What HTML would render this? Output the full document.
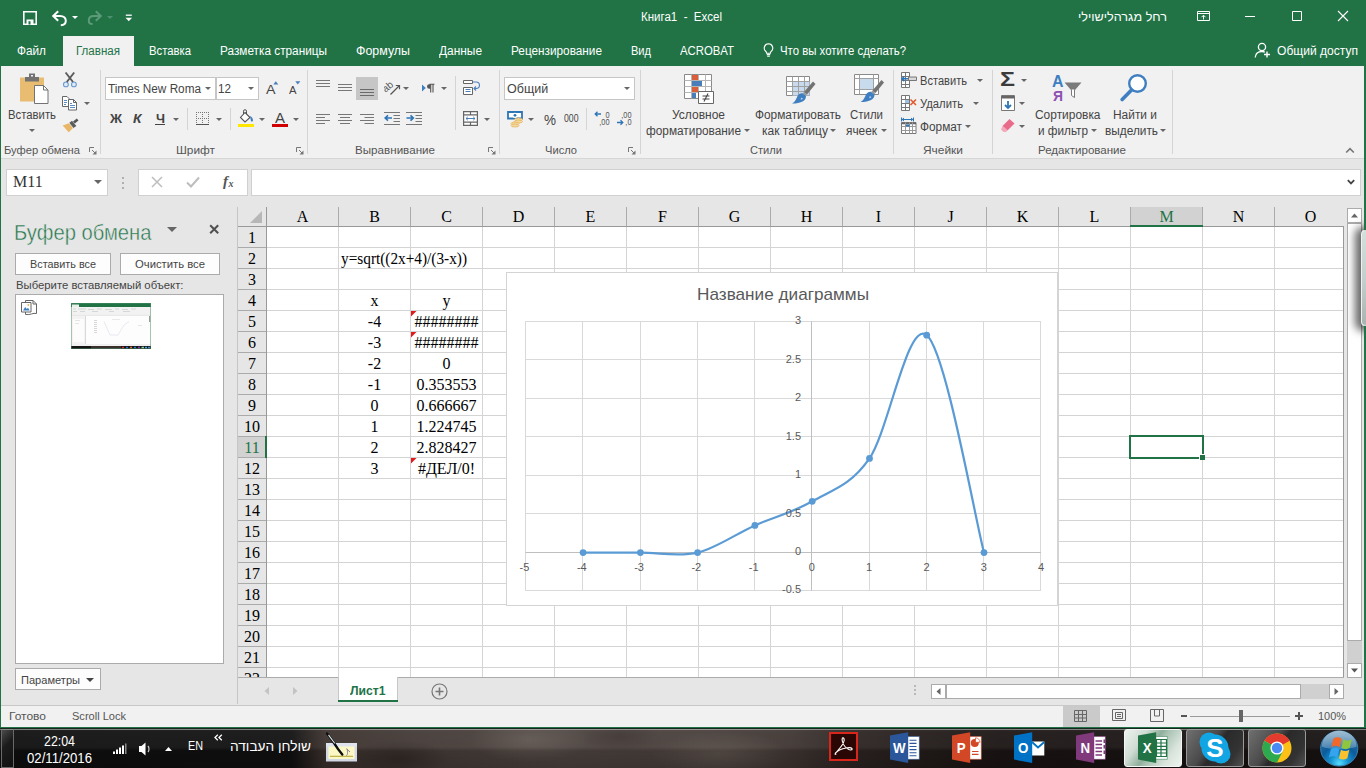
<!DOCTYPE html>
<html lang="ru"><head><meta charset="utf-8"><title>Книга1 - Excel</title>
<style>
html,body{margin:0;padding:0;}
body{width:1366px;height:768px;overflow:hidden;position:relative;background:#e6e6e6;font-family:"Liberation Sans","DejaVu Sans",sans-serif;color:#444;}
.b{position:absolute;box-sizing:border-box;display:block;}
.t{position:absolute;white-space:pre;line-height:1;transform-origin:0 0;color:#444;}
.s{font-family:"Liberation Serif","DejaVu Serif",serif;color:#000;}
</style></head><body>
<div id="window-frame" role="group" aria-label="Excel window">
<div class="b" style="left:0px;top:0px;width:1366px;height:66px;background:#217346;"></div>
<div class="b" style="left:1px;top:66px;width:1364px;height:93px;background:#f1f1f1;"></div>
<div class="b" style="left:1px;top:158px;width:1364px;height:1px;background:#d6d6d6;"></div>
<div class="b" style="left:1px;top:159px;width:1364px;height:546px;background:#e6e6e6;"></div>
</div>
<div id="titlebar" role="group" aria-label="Title bar">
<svg class="b" style="left:23px;top:11px;" width="14" height="14" viewBox="0 0 14 14"><path d="M.8 .8h12.400v12.400H.8z" fill="none" stroke="#fff" stroke-width="1.600"/><path d="M3.500 8.500h7v5h-7z" fill="#fff"/><path d="M5.500 10.200h2v3.300h-2z" fill="#217346"/></svg>
<svg class="b" style="left:51px;top:9.5px;" width="18" height="17" viewBox="0 0 18 17"><path d="M7.2 1.2 2.2 6l5 4.8" fill="none" stroke="#fff" stroke-width="2"/><path d="M2.6 6h6.6c3.4 0 5.6 2 5.6 4.8 0 2.600-2 4.400-5 4.400" fill="none" stroke="#fff" stroke-width="2"/></svg>
<svg class="b" style="left:71.5px;top:15.5px" width="6" height="3" viewBox="0 0 6 3"><path d="M0 0H6L3.0 3Z" fill="#fff"/></svg>
<svg class="b" style="left:84.5px;top:10px;" width="18" height="16" viewBox="0 0 18 16"><path d="M10.800 1.200 15.800 6l-5 4.800" fill="none" stroke="#5c9a78" stroke-width="2"/><path d="M15.400 6H9c-3.400 0-5.200 1.800-5.200 4.400 0 2 1.400 3.600 3.800 3.600" fill="none" stroke="#5c9a78" stroke-width="2"/></svg>
<svg class="b" style="left:106.5px;top:15.5px" width="6" height="3" viewBox="0 0 6 3"><path d="M0 0H6L3.0 3Z" fill="#4f9070"/></svg>
<svg class="b" style="left:125px;top:14px;" width="8" height="8" viewBox="0 0 8 8"><path d="M.8 1.200h6" stroke="#fff" stroke-width="1.300"/><path d="M.5 3.800h6.600L3.800 7.200z" fill="#fff"/></svg>
<span class="t" style="left:641.00px;top:11.00px;font-size:12.5px;transform:scaleX(0.9207);color:#fff;">Книга1  -  Excel</span>
<span class="t" style="left:1078.00px;top:11.00px;font-size:12.5px;transform:scaleX(1.0104);color:#fff;direction:rtl;unicode-bidi:plaintext;">רחל מגרהלישוילי</span>
<svg class="b" style="left:1197px;top:11px;" width="13" height="10" viewBox="0 0 13 10"><path d="M.5 .5h12v9H.5z" fill="none" stroke="#fff"/><path d="M.5 2.500h12" stroke="#fff"/><path d="M6.500 8.500V4.500M4.500 6.200 6.500 4.200 8.500 6.200" fill="none" stroke="#fff" stroke-width="1"/></svg>
<div class="b" style="left:1245px;top:16px;width:10px;height:1px;background:#fff;"></div>
<svg class="b" style="left:1291px;top:10px;" width="12" height="12" viewBox="0 0 12 12"><path d="M1.500 1.500h9v9h-9z" fill="none" stroke="#fff" stroke-width="1"/></svg>
<svg class="b" style="left:1337px;top:10px;" width="12" height="12" viewBox="0 0 12 12"><path d="M1 1l10 10M11 1 1 11" stroke="#fff" stroke-width="1.100"/></svg>
</div>
<div id="ribbon-tabs" role="group" aria-label="Ribbon tabs">
<div class="b" style="left:63px;top:36px;width:71px;height:30px;background:#f1f1f1;"></div>
<span class="t" style="left:17.00px;top:45.00px;font-size:12.5px;transform:scaleX(0.9437);color:#fff;">Файл</span>
<span class="t" style="left:76.00px;top:45.00px;font-size:12.5px;transform:scaleX(0.9248);color:#217346;">Главная</span>
<span class="t" style="left:149.00px;top:45.00px;font-size:12.5px;transform:scaleX(0.9040);color:#fff;">Вставка</span>
<span class="t" style="left:220.00px;top:45.00px;font-size:12.5px;transform:scaleX(0.9436);color:#fff;">Разметка страницы</span>
<span class="t" style="left:356.00px;top:45.00px;font-size:12.5px;transform:scaleX(0.9927);color:#fff;">Формулы</span>
<span class="t" style="left:439.00px;top:45.00px;font-size:12.5px;transform:scaleX(0.9522);color:#fff;">Данные</span>
<span class="t" style="left:511.00px;top:45.00px;font-size:12.5px;transform:scaleX(0.9428);color:#fff;">Рецензирование</span>
<span class="t" style="left:631.00px;top:45.00px;font-size:12.5px;transform:scaleX(0.8844);color:#fff;">Вид</span>
<span class="t" style="left:680.00px;top:45.00px;font-size:12.5px;transform:scaleX(0.9076);color:#fff;">ACROBAT</span>
<svg class="b" style="left:763px;top:43px;" width="11" height="15" viewBox="0 0 11 15"><path d="M5.500 .8a4.300 4.300 0 0 0-2.600 7.700c.5.500.7 1 .7 1.700h3.800c0-.7.200-1.200.7-1.700A4.300 4.300 0 0 0 5.500.8z" fill="none" stroke="#fff" stroke-width="1.100"/><path d="M3.800 11.600h3.400M4.200 13.300h2.600" stroke="#fff" stroke-width="1.100"/></svg>
<span class="t" style="left:780.00px;top:45.00px;font-size:12.5px;transform:scaleX(0.9118);color:#fff;">Что вы хотите сделать?</span>
<svg class="b" style="left:1254px;top:42px;" width="17" height="17" viewBox="0 0 17 17"><circle cx="8" cy="5" r="3.600" fill="none" stroke="#fff" stroke-width="1.300"/><path d="M1.200 15.500c.3-3.600 2.800-6 6.800-6 1.200 0 2 .2 2.800.6" fill="none" stroke="#fff" stroke-width="1.300"/><path d="M13 9.500v6M10 12.500h6" stroke="#fff" stroke-width="1.400"/></svg>
<span class="t" style="left:1277.00px;top:45.00px;font-size:12.5px;transform:scaleX(0.9645);color:#fff;">Общий доступ</span>
</div>
<div id="grp-clipboard" role="group" aria-label="Буфер обмена">
<svg class="b" style="left:20px;top:73px;" width="29" height="32" viewBox="0 0 29 32"><path d="M0 4.500h24v24H0z" fill="#e8bd72"/><path d="M5 4h14v4.500H5z" fill="#737373"/><path d="M9 .5h6v4H9z" fill="#737373"/><path d="M11 2h2v1.500h-2z" fill="#f1f1f1"/>
<path d="M14.500 12.500h9l4.500 4.500v13.500h-13.500z" fill="#fff" stroke="#737373"/><path d="M23.500 12.500v4.500h4.500" fill="none" stroke="#737373"/></svg>
<span class="t" style="left:8.00px;top:109.00px;font-size:12.5px;transform:scaleX(0.9059);">Вставить</span>
<svg class="b" style="left:29.0px;top:129.0px" width="6" height="3" viewBox="0 0 6 3"><path d="M0 0H6L3.0 3Z" fill="#666"/></svg>
<svg class="b" style="left:62px;top:71px;" width="17" height="18" viewBox="0 0 17 18"><circle cx="3.900" cy="13.400" r="2.400" fill="#ddebf9" stroke="#6a98cf" stroke-width="1.100"/><circle cx="11.900" cy="13.400" r="2.400" fill="#ddebf9" stroke="#6a98cf" stroke-width="1.100"/><path d="M3.600 1.500 11 11M12.200 1.500 4.800 11" stroke="#5a5a5a" stroke-width="1.900" fill="none"/></svg>
<svg class="b" style="left:62px;top:95px;" width="16" height="16" viewBox="0 0 16 16"><path d="M.5 1.500h4.500l2 2v8H.5z" fill="#fff" stroke="#666"/><path d="M2 5.500h3M2 7.500h3M2 9.500h2" stroke="#4a7ebb" stroke-width=".9"/><path d="M6.500 4.500h5l3 3v7.500h-8z" fill="#fff" stroke="#666"/><path d="M11.500 4.500v3h3" fill="none" stroke="#666"/><path d="M8 8.500h2M8 10.500h5M8 12.500h5" stroke="#4a7ebb" stroke-width=".9"/></svg>
<svg class="b" style="left:83.5px;top:102.0px" width="6" height="3" viewBox="0 0 6 3"><path d="M0 0H6L3.0 3Z" fill="#666"/></svg>
<svg class="b" style="left:62px;top:117px;" width="19" height="17" viewBox="0 0 19 17"><path d="M11 4.500 14.800 1.500 16.500 3.500 12.800 6.500z" fill="#555"/><path d="M7.300 5.800 10 3.800 14.400 9 11.400 10.900z" fill="#5c5c5c"/><path d="M.7 8.400 7 6.200 10.800 11.300 6.700 15.200z" fill="#e8b664"/></svg>
<span class="t" style="left:4.00px;top:145.00px;font-size:10.5px;transform:scaleX(1.0652);color:#555;">Буфер обмена</span>
<svg class="b" style="left:89px;top:147px;" width="8" height="8" viewBox="0 0 8 8"><path d="M.5 5V.5H5" fill="none" stroke="#777"/><path d="M3 3l3.500 3.500" stroke="#777"/><path d="M7.500 3.500v4h-4z" fill="#777"/></svg>
<div class="b" style="left:100px;top:70px;width:1px;height:84px;background:#d4d4d4;"></div>
</div>
<div id="grp-font" role="group" aria-label="Шрифт">
<div class="b" style="left:105px;top:77px;width:111px;height:23px;background:#fff;border:1px solid #c6c6c6;"></div>
<span class="t" style="left:108.00px;top:83.00px;font-size:12.5px;transform:scaleX(0.9407);">Times New Roma</span>
<svg class="b" style="left:205.0px;top:87.0px" width="6" height="3" viewBox="0 0 6 3"><path d="M0 0H6L3.0 3Z" fill="#666"/></svg>
<div class="b" style="left:216px;top:77px;width:43px;height:23px;background:#fff;border:1px solid #c6c6c6;"></div>
<span class="t" style="left:218.00px;top:83.00px;font-size:12.5px;transform:scaleX(0.9350);">12</span>
<svg class="b" style="left:248.0px;top:87.0px" width="6" height="3" viewBox="0 0 6 3"><path d="M0 0H6L3.0 3Z" fill="#666"/></svg>
<span class="t" style="left:265.50px;top:83.00px;font-size:13px;transform:scaleX(1.0956);">A</span>
<svg class="b" style="left:273px;top:81px;" width="6" height="4" viewBox="0 0 6 4"><path d="M.3 3.500 2.800 .3 5.300 3.500z" fill="#4a7ebb"/></svg>
<span class="t" style="left:288.50px;top:85.00px;font-size:10.5px;transform:scaleX(1.0709);">A</span>
<svg class="b" style="left:295px;top:81px;" width="6" height="4" viewBox="0 0 6 4"><path d="M.3 .3h5L2.800 3.500z" fill="#4a7ebb"/></svg>
<span class="t" style="left:109.50px;top:112.00px;font-size:13.5px;transform:scaleX(0.9835);color:#444;font-weight:700;">Ж</span>
<span class="t" style="left:133.00px;top:112.00px;font-size:13.5px;transform:scaleX(1.0242);color:#444;font-weight:700;font-style:italic;">К</span>
<span class="t" style="left:155.50px;top:112.00px;font-size:13.5px;transform:scaleX(0.9488);color:#444;font-weight:700;">Ч</span>
<div class="b" style="left:155px;top:124px;width:10px;height:1px;background:#444;"></div>
<svg class="b" style="left:173.0px;top:118.0px" width="6" height="3" viewBox="0 0 6 3"><path d="M0 0H6L3.0 3Z" fill="#666"/></svg>
<div class="b" style="left:187px;top:108px;width:1px;height:22px;background:#d4d4d4;"></div>
<svg class="b" style="left:196px;top:112px;" width="14" height="14" viewBox="0 0 14 14"><path d="M.5 0v12M6.500 0v12M12.500 0v12M0 .5h13M0 6.500h13" fill="none" stroke="#777" stroke-dasharray="1 1"/><path d="M0 12.500h13" stroke="#555"/></svg>
<svg class="b" style="left:216.0px;top:118.0px" width="6" height="3" viewBox="0 0 6 3"><path d="M0 0H6L3.0 3Z" fill="#666"/></svg>
<div class="b" style="left:230px;top:108px;width:1px;height:22px;background:#d4d4d4;"></div>
<svg class="b" style="left:237px;top:109px;" width="18" height="19" viewBox="0 0 18 19"><path d="M8 3.500 13 8.500 8 13 3.500 8.500z" fill="#fff" stroke="#555" stroke-width="1.100"/><path d="M6.500 5V2.200a1.500 1.500 0 0 1 3 0V5" fill="none" stroke="#555"/><path d="M13 7c1.800.8 3 2.500 3 4.200 0 .8-.5 1.300-1.100 1.300s-1.100-.5-1.100-1.300z" fill="#3f7fc1"/><path d="M1 15h16v3H1z" fill="#ffe700"/></svg>
<svg class="b" style="left:259.0px;top:118.0px" width="6" height="3" viewBox="0 0 6 3"><path d="M0 0H6L3.0 3Z" fill="#666"/></svg>
<span class="t" style="left:275.00px;top:111.00px;font-size:14px;transform:scaleX(1.0709);">A</span>
<div class="b" style="left:272px;top:124px;width:16px;height:3px;background:#d00000;"></div>
<svg class="b" style="left:293.0px;top:118.0px" width="6" height="3" viewBox="0 0 6 3"><path d="M0 0H6L3.0 3Z" fill="#666"/></svg>
<span class="t" style="left:176.00px;top:145.00px;font-size:10.5px;transform:scaleX(1.1289);color:#555;">Шрифт</span>
<svg class="b" style="left:296px;top:147px;" width="8" height="8" viewBox="0 0 8 8"><path d="M.5 5V.5H5" fill="none" stroke="#777"/><path d="M3 3l3.500 3.500" stroke="#777"/><path d="M7.500 3.500v4h-4z" fill="#777"/></svg>
<div class="b" style="left:307px;top:70px;width:1px;height:84px;background:#d4d4d4;"></div>
</div>
<div id="grp-align" role="group" aria-label="Выравнивание">
<svg class="b" style="left:316px;top:80px;" width="20" height="10" viewBox="0 0 20 10"><path d="M0 0.5h14" stroke="#777"/><path d="M0 3.5h14" stroke="#777"/><path d="M0 6.5h14" stroke="#777"/></svg>
<svg class="b" style="left:338px;top:84px;" width="20" height="10" viewBox="0 0 20 10"><path d="M0 0.5h14" stroke="#777"/><path d="M0 3.5h14" stroke="#777"/><path d="M0 6.5h14" stroke="#777"/></svg>
<div class="b" style="left:356px;top:77px;width:22px;height:23px;background:#c6c6c6;"></div>
<svg class="b" style="left:360px;top:89px;" width="20" height="10" viewBox="0 0 20 10"><path d="M0 0.5h14" stroke="#6a6a6a"/><path d="M0 3.5h14" stroke="#6a6a6a"/><path d="M0 6.5h14" stroke="#6a6a6a"/></svg>
<svg class="b" style="left:384px;top:79px;" width="18" height="18" viewBox="0 0 18 18"><path d="M6.500 15.500 15 7" stroke="#555" stroke-width="1.200"/><path d="M11.800 6.500h3.700v3.700" fill="none" stroke="#555" stroke-width="1.200"/><text x="-1" y="11" font-size="10" font-family="Liberation Sans,sans-serif" fill="#555" transform="rotate(-40 4 9)">ab</text></svg>
<svg class="b" style="left:403.0px;top:87.0px" width="6" height="3" viewBox="0 0 6 3"><path d="M0 0H6L3.0 3Z" fill="#666"/></svg>
<svg class="b" style="left:421px;top:83px;" width="16" height="11" viewBox="0 0 16 11"><path d="M1 1.500 4.800 5 1 8.500z" fill="#3f7fc1"/><path d="M9.500 1.200H8.300a2.300 2.300 0 0 0 0 4.600H9.500z" fill="#555"/><path d="M9.700 1.200V9.500M12 1.200V9.500M8.500 1.200h5" stroke="#555" stroke-width="1.100" fill="none"/></svg>
<svg class="b" style="left:441.0px;top:87.0px" width="6" height="3" viewBox="0 0 6 3"><path d="M0 0H6L3.0 3Z" fill="#666"/></svg>
<div class="b" style="left:455px;top:76px;width:1px;height:54px;background:#d4d4d4;"></div>
<svg class="b" style="left:463px;top:80px;" width="17" height="16" viewBox="0 0 17 16"><path d="M.5 .5h9v3h-9z" fill="#fff" stroke="#666"/><path d="M.5 7.500h9v7h-9z" fill="#fff" stroke="#666"/><path d="M2.500 9.500h5M2.500 11.500h5" stroke="#4a7ebb"/><path d="M10 2h3.200a2.800 2.800 0 0 1 0 6.500H11.500" fill="none" stroke="#4a7ebb" stroke-width="1.100"/><path d="M13 6.500 11 8.500l2 2" fill="none" stroke="#4a7ebb" stroke-width="1.100"/></svg>
<svg class="b" style="left:316px;top:114px;" width="20" height="13" viewBox="0 0 20 13"><path d="M0 0.5h14" stroke="#777"/><path d="M0 3.5h9" stroke="#777"/><path d="M0 6.5h14" stroke="#777"/><path d="M0 9.5h9" stroke="#777"/></svg>
<svg class="b" style="left:338px;top:114px;" width="20" height="13" viewBox="0 0 20 13"><path d="M0 0.5h14" stroke="#777"/><path d="M2 3.5h10" stroke="#777"/><path d="M0 6.5h14" stroke="#777"/><path d="M2 9.5h10" stroke="#777"/></svg>
<svg class="b" style="left:360px;top:114px;" width="20" height="13" viewBox="0 0 20 13"><path d="M0 0.5h14" stroke="#777"/><path d="M4.5 3.5h9.5" stroke="#777"/><path d="M0 6.5h14" stroke="#777"/><path d="M4.5 9.5h9.5" stroke="#777"/></svg>
<svg class="b" style="left:384px;top:111px;" width="17" height="16" viewBox="0 0 17 16"><path d="M0 .5h16M9.500 3.500h6.500M9.500 6.500h6.500M9.500 9.500h6.500M0 12.500h16" stroke="#777" transform="translate(0,1)"/><path d="M8 5.500H1.200M4 2.800 1.200 5.500 4 8.200" fill="none" stroke="#2e75b6" stroke-width="1.700" transform="translate(0,1.500)"/></svg>
<svg class="b" style="left:406px;top:111px;" width="17" height="16" viewBox="0 0 17 16"><path d="M0 .5h16M9.500 3.500h6.500M9.500 6.500h6.500M9.500 9.500h6.500M0 12.500h16" stroke="#777" transform="translate(0,1)"/><path d="M.5 5.500h6.800M4.500 2.800l2.800 2.700L4.500 8.200" fill="none" stroke="#2e75b6" stroke-width="1.700" transform="translate(0,1.500)"/></svg>
<svg class="b" style="left:463px;top:111px;" width="16" height="15" viewBox="0 0 16 15"><path d="M.6 .6h13.800v13.800H.6z" fill="#fff" stroke="#666" stroke-width="1.200"/><path d="M.6 3.800h13.800M.6 11.200h13.800M7.500 .6v3.200M7.500 11.200v3.200" fill="none" stroke="#666" stroke-width="1.200"/><path d="M3 7.500h9M4.800 5.800 3 7.500l1.800 1.700M10.200 5.800 12 7.500l-1.800 1.700" fill="none" stroke="#4a7ebb" stroke-width="1"/></svg>
<svg class="b" style="left:484.0px;top:118.0px" width="6" height="3" viewBox="0 0 6 3"><path d="M0 0H6L3.0 3Z" fill="#666"/></svg>
<span class="t" style="left:355.00px;top:145.00px;font-size:10.5px;transform:scaleX(1.1069);color:#555;">Выравнивание</span>
<svg class="b" style="left:488px;top:147px;" width="8" height="8" viewBox="0 0 8 8"><path d="M.5 5V.5H5" fill="none" stroke="#777"/><path d="M3 3l3.500 3.500" stroke="#777"/><path d="M7.500 3.500v4h-4z" fill="#777"/></svg>
<div class="b" style="left:499px;top:70px;width:1px;height:84px;background:#d4d4d4;"></div>
</div>
<div id="grp-number" role="group" aria-label="Число">
<div class="b" style="left:504px;top:77px;width:131px;height:23px;background:#fff;border:1px solid #c6c6c6;"></div>
<span class="t" style="left:507.00px;top:83.00px;font-size:12.5px;">Общий</span>
<svg class="b" style="left:624.0px;top:87.0px" width="6" height="3" viewBox="0 0 6 3"><path d="M0 0H6L3.0 3Z" fill="#666"/></svg>
<svg class="b" style="left:506px;top:110px;" width="19" height="18" viewBox="0 0 19 18"><path d="M2 2h14v6.500H2z" fill="#fff" stroke="#2e75b6" stroke-width="1.800"/><circle cx="9" cy="5.300" r="2.600" fill="#fff"/><circle cx="9" cy="5.300" r="1.400" fill="#2e75b6"/><ellipse cx="12.500" cy="9.500" rx="4" ry="1.500" fill="#f4d9a0" stroke="#e3b057" stroke-width=".7"/><ellipse cx="12.500" cy="11.500" rx="4" ry="1.500" fill="#f4d9a0" stroke="#e3b057" stroke-width=".7"/><ellipse cx="9" cy="13.500" rx="4" ry="1.500" fill="#f4d9a0" stroke="#e3b057" stroke-width=".7"/><ellipse cx="9" cy="15.500" rx="4" ry="1.500" fill="#f4d9a0" stroke="#e3b057" stroke-width=".7"/></svg>
<svg class="b" style="left:528.0px;top:118.0px" width="6" height="3" viewBox="0 0 6 3"><path d="M0 0H6L3.0 3Z" fill="#666"/></svg>
<span class="t" style="left:543.50px;top:112.00px;font-size:15px;transform:scaleX(0.8997);">%</span>
<span class="t" style="left:564.00px;top:114.00px;font-size:10px;transform:scaleX(0.8691);">000</span>
<div class="b" style="left:586px;top:108px;width:1px;height:22px;background:#d4d4d4;"></div>
<svg class="b" style="left:593px;top:110px;" width="19" height="18" viewBox="0 0 19 18"><text transform="translate(16.500,7.5) scale(.82,1)" font-size="9" font-family="Liberation Sans,sans-serif" text-anchor="end" fill="#555">0</text><text transform="translate(16.500,15.3) scale(.82,1)" font-size="9" font-family="Liberation Sans,sans-serif" text-anchor="end" fill="#555">,00</text><path d="M8 4H2.200M4.500 1.700 2.200 4 4.500 6.300" fill="none" stroke="#2e75b6" stroke-width="1.300"/></svg>
<svg class="b" style="left:614.5px;top:110px;" width="19" height="18" viewBox="0 0 19 18"><text transform="translate(16.500,7.5) scale(.82,1)" font-size="9" font-family="Liberation Sans,sans-serif" text-anchor="end" fill="#555">,00</text><text transform="translate(16.500,15.3) scale(.82,1)" font-size="9" font-family="Liberation Sans,sans-serif" text-anchor="end" fill="#555">,0</text><path d="M2 12.500h5.800M5.500 10.200l2.300 2.300-2.300 2.300" fill="none" stroke="#2e75b6" stroke-width="1.300"/></svg>
<span class="t" style="left:545.00px;top:145.00px;font-size:10.5px;transform:scaleX(1.0597);color:#555;">Число</span>
<svg class="b" style="left:628px;top:147px;" width="8" height="8" viewBox="0 0 8 8"><path d="M.5 5V.5H5" fill="none" stroke="#777"/><path d="M3 3l3.500 3.500" stroke="#777"/><path d="M7.500 3.500v4h-4z" fill="#777"/></svg>
<div class="b" style="left:640px;top:70px;width:1px;height:84px;background:#d4d4d4;"></div>
</div>
<div id="grp-styles" role="group" aria-label="Стили">
<svg class="b" style="left:684px;top:74px;" width="31" height="31" viewBox="0 0 31 31"><path d="M.5 .5h27v24H.5z" fill="#fff" stroke="#8a8a8a"/><path d="M.5 6.500h27M.5 12.500h27M.5 18.500h27M7.500 .5v24M14.500 .5v24M21.500 .5v24" stroke="#b5b5b5"/>
<path d="M8 1h6v5H8z" fill="#d9603b"/><path d="M8 7h10v5H8z" fill="#4a7ebb"/><path d="M8 13h6v5H8z" fill="#d9603b"/><path d="M8 19h4v5H8z" fill="#4a7ebb"/>
<path d="M14.500 17.500h15v12h-15z" fill="#fff" stroke="#666"/><path d="M18.500 22h7M18.500 25h7M24 19.500l-4 8" stroke="#444" stroke-width="1.100"/></svg>
<span class="t" style="left:672.00px;top:109.00px;font-size:12.5px;transform:scaleX(0.9603);">Условное</span>
<span class="t" style="left:646.00px;top:125.00px;font-size:12.5px;transform:scaleX(0.9466);">форматирование</span>
<svg class="b" style="left:744.0px;top:129.0px" width="6" height="3" viewBox="0 0 6 3"><path d="M0 0H6L3.0 3Z" fill="#666"/></svg>
<svg class="b" style="left:786px;top:76px;" width="31" height="31" viewBox="0 0 31 31"><path d="M.5 .5h23v19H.5z" fill="#fff" stroke="#8a8a8a"/><path d="M6.500 5.500h17v14h-17z" fill="#c8daee"/><path d="M.5 5.500h23M.5 10.500h23M.5 15.500h23M6.500 .5v19M12.500 .5v19M18.500 .5v19" stroke="#a0a0a0"/><g transform="translate(0,-1)"><path d="M27 6.500 29.500 9 21 19.500 18 17z" fill="#737373"/><path d="M18 17 21 19.500 19.700 21 16.700 18.500z" fill="#9a9a9a"/><path d="M16.500 18.300 20 21.200C20 25.500 15.500 28.500 6 28.500 9.500 26.800 10.300 23.500 11.500 21 12.500 19 15 17.800 16.500 18.300z" fill="#3f7fc1"/><path d="M15 22.800c.9-.2 1.600.2 1.800.9-.6.600-1.300 1-2 1.100z" fill="#b9d2ee"/></g></svg>
<span class="t" style="left:755.00px;top:109.00px;font-size:12.5px;transform:scaleX(0.9481);">Форматировать</span>
<span class="t" style="left:762.00px;top:125.00px;font-size:12.5px;transform:scaleX(0.9641);">как таблицу</span>
<svg class="b" style="left:830.0px;top:129.0px" width="6" height="3" viewBox="0 0 6 3"><path d="M0 0H6L3.0 3Z" fill="#666"/></svg>
<svg class="b" style="left:854px;top:74px;" width="31" height="31" viewBox="0 0 31 31"><path d="M.5 .5h24v20H.5z" fill="#fff" stroke="#8a8a8a"/><path d="M.5 4.500h24M.5 15.500h24M5.500 .5v20M19.500 .5v20" stroke="#a0a0a0"/><path d="M6 5h13v10H6z" fill="#c8daee"/><g transform="translate(0.5,-0.5)"><path d="M27 6.500 29.500 9 21 19.500 18 17z" fill="#737373"/><path d="M18 17 21 19.500 19.700 21 16.700 18.500z" fill="#9a9a9a"/><path d="M16.500 18.300 20 21.200C20 25.500 15.500 28.500 6 28.500 9.500 26.800 10.300 23.500 11.500 21 12.500 19 15 17.800 16.500 18.300z" fill="#3f7fc1"/><path d="M15 22.800c.9-.2 1.600.2 1.800.9-.6.600-1.300 1-2 1.100z" fill="#b9d2ee"/></g></svg>
<span class="t" style="left:850.00px;top:109.00px;font-size:12.5px;transform:scaleX(0.9164);">Стили</span>
<span class="t" style="left:846.00px;top:125.00px;font-size:12.5px;transform:scaleX(0.9494);">ячеек</span>
<svg class="b" style="left:881.0px;top:129.0px" width="6" height="3" viewBox="0 0 6 3"><path d="M0 0H6L3.0 3Z" fill="#666"/></svg>
<span class="t" style="left:750.00px;top:145.00px;font-size:10.5px;transform:scaleX(1.0579);color:#555;">Стили</span>
<div class="b" style="left:893px;top:70px;width:1px;height:84px;background:#d4d4d4;"></div>
</div>
<div id="grp-cells" role="group" aria-label="Ячейки">
<svg class="b" style="left:901px;top:72px;" width="17" height="17" viewBox="0 0 17 17"><path d="M.5 .5h8v15h-8zM.5 4.500h8M.5 8.500h8M.5 12.500h8M4.500 .5v15" fill="#fff" stroke="#777"/><path d="M7.500 5h8v3.500h-8z" fill="#d8d8d8" stroke="#777"/><path d="M7 6.800H1M3.300 4.500 1 6.800l2.300 2.300" fill="none" stroke="#2e75b6" stroke-width="1.500"/></svg>
<span class="t" style="left:920.00px;top:75.00px;font-size:12.5px;transform:scaleX(0.8870);">Вставить</span>
<svg class="b" style="left:977.0px;top:79.0px" width="6" height="3" viewBox="0 0 6 3"><path d="M0 0H6L3.0 3Z" fill="#666"/></svg>
<svg class="b" style="left:901px;top:95px;" width="17" height="17" viewBox="0 0 17 17"><path d="M.5 .5h8v15h-8zM.5 4.500h8M.5 8.500h8M.5 12.500h8M4.500 .5v15" fill="#fff" stroke="#777"/><path d="M4 5h4v3H4z" fill="#9cc0e6"/><path d="M9.500 4.500l5.500 5.500M15 4.500 9.500 10" stroke="#e25a2b" stroke-width="1.600"/></svg>
<span class="t" style="left:920.00px;top:98.00px;font-size:12.5px;transform:scaleX(0.9010);">Удалить</span>
<svg class="b" style="left:973.0px;top:102.0px" width="6" height="3" viewBox="0 0 6 3"><path d="M0 0H6L3.0 3Z" fill="#666"/></svg>
<svg class="b" style="left:901px;top:117px;" width="17" height="18" viewBox="0 0 17 18"><path d="M.5 .5v4M12.500 .5v4M1 2.500h11M3 1 1.200 2.500 3 4M10 1l1.800 1.500L10 4" fill="none" stroke="#2e75b6"/><path d="M.5 5.500h14.500v11H.5z" fill="#fff" stroke="#777"/><path d="M.5 6.500h14.500" stroke="#666" stroke-width="1.500"/><path d="M.5 9.500h14.500M.5 13.500h14.500M4.500 5.500v11M8.500 5.500v11M11.500 5.500v11" stroke="#999"/><path d="M5 7.500h3.500v2h-3.500z" fill="#2e75b6"/></svg>
<span class="t" style="left:920.00px;top:121.00px;font-size:12.5px;transform:scaleX(0.9459);">Формат</span>
<svg class="b" style="left:965.0px;top:125.0px" width="6" height="3" viewBox="0 0 6 3"><path d="M0 0H6L3.0 3Z" fill="#666"/></svg>
<span class="t" style="left:923.00px;top:145.00px;font-size:10.5px;transform:scaleX(1.1358);color:#555;">Ячейки</span>
<div class="b" style="left:992px;top:70px;width:1px;height:84px;background:#d4d4d4;"></div>
</div>
<div id="grp-editing" role="group" aria-label="Редактирование">
<span class="t" style="left:1000.00px;top:70.00px;font-size:19.5px;transform:scaleX(1.2819);color:#3b3b3b;font-weight:700;">Σ</span>
<svg class="b" style="left:1021.0px;top:79.0px" width="6" height="3" viewBox="0 0 6 3"><path d="M0 0H6L3.0 3Z" fill="#666"/></svg>
<svg class="b" style="left:1001px;top:95px;" width="15" height="17" viewBox="0 0 15 17"><path d="M.5 .5h13v15H.5z" fill="#fff" stroke="#777"/><path d="M.5 1h13v2.500H.5z" fill="#666"/><path d="M7 6V13M4 10l3 3 3-3" fill="none" stroke="#2e75b6" stroke-width="1.800"/></svg>
<svg class="b" style="left:1019.0px;top:102.0px" width="6" height="3" viewBox="0 0 6 3"><path d="M0 0H6L3.0 3Z" fill="#666"/></svg>
<svg class="b" style="left:1000px;top:118px;" width="16" height="15" viewBox="0 0 16 15"><path d="M9.500 1 14.500 5.500 7.500 12.500 2.500 8z" fill="#e86c8a"/><path d="M2.500 8 7.500 12.500 6 14H3.500L1 11.500z" fill="#f3a9b8"/></svg>
<svg class="b" style="left:1019.0px;top:125.0px" width="6" height="3" viewBox="0 0 6 3"><path d="M0 0H6L3.0 3Z" fill="#666"/></svg>
<span class="t" style="left:1052.00px;top:74.00px;font-size:16px;transform:scaleX(0.9953);color:#3f7fc1;font-weight:700;">A</span>
<span class="t" style="left:1053.00px;top:89.00px;font-size:14.5px;transform:scaleX(0.9595);color:#8e4fb3;font-weight:700;">Я</span>
<svg class="b" style="left:1064px;top:82px;" width="18" height="17" viewBox="0 0 18 17"><path d="M.5 .5h17L11 8H7z" fill="#7a7a7a"/><path d="M7.500 7.500V13.500l3 2V7.500" fill="#fff" stroke="#7a7a7a"/></svg>
<span class="t" style="left:1034.50px;top:109.00px;font-size:12.5px;transform:scaleX(0.9548);">Сортировка</span>
<span class="t" style="left:1038.00px;top:125.00px;font-size:12.5px;transform:scaleX(0.9393);">и фильтр</span>
<svg class="b" style="left:1090.5px;top:129.0px" width="6" height="3" viewBox="0 0 6 3"><path d="M0 0H6L3.0 3Z" fill="#666"/></svg>
<svg class="b" style="left:1120px;top:73px;" width="30" height="30" viewBox="0 0 30 30"><circle cx="17.500" cy="10.500" r="8.300" fill="#fff" stroke="#3f7fc1" stroke-width="2.400"/><path d="M11.500 17 2.200 26.500" stroke="#3f7fc1" stroke-width="3.600" stroke-linecap="round"/></svg>
<span class="t" style="left:1113.00px;top:109.00px;font-size:12.5px;transform:scaleX(0.9539);">Найти и</span>
<span class="t" style="left:1105.00px;top:125.00px;font-size:12.5px;transform:scaleX(0.9469);">выделить</span>
<svg class="b" style="left:1159.5px;top:129.0px" width="6" height="3" viewBox="0 0 6 3"><path d="M0 0H6L3.0 3Z" fill="#666"/></svg>
<span class="t" style="left:1038.00px;top:145.00px;font-size:10.5px;transform:scaleX(1.1002);color:#555;">Редактирование</span>
<div class="b" style="left:1172px;top:70px;width:1px;height:84px;background:#d4d4d4;"></div>
<svg class="b" style="left:1345px;top:147px;" width="10" height="7" viewBox="0 0 10 7"><path d="M1.200 5.500 5 1.700 8.800 5.500" fill="none" stroke="#777" stroke-width="1.700"/></svg>
</div>
<div id="formula-bar" role="group" aria-label="Formula bar">
<div class="b" style="left:6px;top:169px;width:102px;height:27px;background:#fff;border:1px solid #d0d0d0;"></div>
<span class="t s" style="left:13.00px;top:174.00px;font-size:16px;color:#333;">M11</span>
<svg class="b" style="left:93.5px;top:180.0px" width="8" height="4" viewBox="0 0 8 4"><path d="M0 0H8L4.0 4Z" fill="#666"/></svg>
<div class="b" style="left:122px;top:177px;width:2px;height:2px;background:#b0b0b0;"></div>
<div class="b" style="left:122px;top:182px;width:2px;height:2px;background:#b0b0b0;"></div>
<div class="b" style="left:122px;top:187px;width:2px;height:2px;background:#b0b0b0;"></div>
<div class="b" style="left:138px;top:169px;width:110px;height:27px;background:#fff;border:1px solid #d0d0d0;"></div>
<svg class="b" style="left:151px;top:176px;" width="12" height="12" viewBox="0 0 12 12"><path d="M1 1l10 10M11 1 1 11" stroke="#bdbdbd" stroke-width="1.500"/></svg>
<svg class="b" style="left:186px;top:176px;" width="14" height="12" viewBox="0 0 14 12"><path d="M1 6.500 5 10.500 13 1.500" fill="none" stroke="#bdbdbd" stroke-width="2"/></svg>
<span class="t s" style="left:223.00px;top:174.00px;font-size:15px;color:#555;font-weight:700;font-style:italic;">f</span>
<span class="t s" style="left:228.50px;top:179.00px;font-size:10px;color:#555;font-weight:700;font-style:italic;">x</span>
<div class="b" style="left:251px;top:169px;width:1110px;height:27px;background:#fff;border:1px solid #d0d0d0;"></div>
<svg class="b" style="left:1347px;top:179px;" width="8" height="6" viewBox="0 0 8 6"><path d="M.8 1.200 4 4.400 7.200 1.200" fill="none" stroke="#444" stroke-width="1.800"/></svg>
</div>
<div id="clipboard-pane" role="group" aria-label="Clipboard pane">
<span class="t" style="left:14.00px;top:222.00px;font-size:22.5px;transform:scaleX(0.8994);color:#217346;-webkit-text-stroke:.5px #e6e6e6;">Буфер обмена</span>
<svg class="b" style="left:167.0px;top:226.5px" width="10" height="5" viewBox="0 0 10 5"><path d="M0 0H10L5.0 5Z" fill="#666"/></svg>
<svg class="b" style="left:209px;top:224px;" width="11" height="11" viewBox="0 0 11 11"><path d="M1.200 1.200l8 8M9.200 1.200l-8 8" stroke="#505050" stroke-width="2"/></svg>
<div class="b" style="left:15px;top:253px;width:96px;height:22px;background:#fdfdfd;border:1px solid #ababab;"></div>
<span class="t" style="left:29.50px;top:259.00px;font-size:10.5px;transform:scaleX(1.0317);">Вставить все</span>
<div class="b" style="left:120px;top:253px;width:100px;height:22px;background:#fdfdfd;border:1px solid #ababab;"></div>
<span class="t" style="left:135.00px;top:259.00px;font-size:10.5px;transform:scaleX(1.0740);">Очистить все</span>
<span class="t" style="left:15.50px;top:280.00px;font-size:10.5px;transform:scaleX(1.0767);">Выберите вставляемый объект:</span>
<div class="b" style="left:15px;top:294px;width:209px;height:370px;background:#fff;border:1px solid #ababab;"></div>
<svg class="b" style="left:21px;top:300px;" width="17" height="17" viewBox="0 0 17 17"><path d="M4.500 2.500V.5h7.500l3.500 3.500v9.500c-3.500-1-6 1.800-11 1V11.500" fill="#fff" stroke="#666"/><path d="M12 .5v3.500h3.500" fill="none" stroke="#666"/><path d="M.5 2.500h9.500v9.500H.5z" fill="#fff" stroke="#666"/><path d="M2 10.500 4.200 7l1.600 2 1.200-1.200 1.700 2.700z" fill="#3f7fc1"/><circle cx="7.300" cy="5" r=".9" fill="#e8b84a"/></svg>
<svg class="b" style="left:71px;top:303px;" width="80" height="46" viewBox="0 0 80 46"><rect width="80" height="46" fill="#fdfdfd"/><rect width="80" height="4" fill="#217346"/><rect x="1" y="1.500" width="7" height="2.500" fill="#e8efe9"/><rect y="4" width="80" height="7.500" fill="#f1f2f1"/>
<path d="M2 6h3M7 6h8M17 6.500h6M26 6h5M34 6.500h7M44 6h4M51 6.500h6M60 6h5M2 8.500h4M9 8.500h5M21 8.500h6M38 8.500h5M52 8.500h7" stroke="#d4d8d4" stroke-width="1"/>
<rect y="11.500" width="80" height="1.500" fill="#e9e9e9"/><rect x="1" y="13" width="13" height="28" fill="#f3f3f3"/><rect x="2" y="16" width="11" height="23" fill="#fcfcfc"/><path d="M14.500 13v28" stroke="#cfcfcf" stroke-width=".8"/>
<path d="M4 17.500h5M4 20.500h4" stroke="#ddd" stroke-width=".8"/>
<path d="M23 17.500h3M23 19.500h3M23 21.500h3M23 23.500h3M23 25.500h3M23 27.500h3M23 29.500h3" stroke="#d2d2d2" stroke-width=".9"/>
<path d="M33 18.500l6 13.500h8l6-10 5-3.500" fill="none" stroke="#dfe5ec" stroke-width=".8"/><path d="M41 16.500h8" stroke="#e3e3e3" stroke-width=".8"/><path d="M67 22.500h4" stroke="#e0e0e0" stroke-width=".8"/>
<rect x="78" y="13" width="1.200" height="6" fill="#9a9a9a"/>
<rect y="41" width="80" height="2" fill="#f0f0f0"/><rect y="43" width="80" height="3" fill="#151515"/><rect x="20" y="43" width="30" height="3" fill="#3a302c"/><path d="M51 44.500h2" stroke="#c33" stroke-width="1.500"/><path d="M55 44.500h2" stroke="#36c" stroke-width="1.500"/><path d="M59 44.500h2" stroke="#d63" stroke-width="1.500"/><path d="M63 44.500h2" stroke="#27c" stroke-width="1.500"/><path d="M67 44.500h2" stroke="#83a" stroke-width="1.500"/><path d="M70.500 44.500h2.500" stroke="#9c9" stroke-width="1.500"/><path d="M74 44.500h2" stroke="#3ae" stroke-width="1.500"/><path d="M77 44.500h2" stroke="#48c" stroke-width="1.500"/>
<rect x=".25" y=".25" width="79.500" height="45.500" fill="none" stroke="#4d8c69" stroke-width=".5"/></svg>
<div class="b" style="left:15px;top:668px;width:86px;height:22px;background:#fdfdfd;border:1px solid #ababab;"></div>
<span class="t" style="left:21.00px;top:675.00px;font-size:10.5px;transform:scaleX(1.0541);">Параметры</span>
<svg class="b" style="left:86.0px;top:677.5px" width="8" height="4" viewBox="0 0 8 4"><path d="M0 0H8L4.0 4Z" fill="#444"/></svg>
<div class="b" style="left:237px;top:207px;width:1px;height:497px;background:#c6c6c6;"></div>
</div>
<div id="sheet" role="group" aria-label="Worksheet">
<div class="b" style="left:238px;top:207px;width:1106px;height:470px;background:#fff;"></div>
<div class="b" style="left:238px;top:207px;width:1106px;height:20px;background:#e6e6e6;"></div>
<div class="b" style="left:238px;top:227px;width:28px;height:450px;background:#e6e6e6;"></div>
<div class="b" style="left:1131px;top:207px;width:71px;height:19px;background:#d2d2d2;"></div>
<div class="b" style="left:238px;top:437px;width:27px;height:20px;background:#d2d2d2;"></div>
<svg class="b" style="left:0;top:0" width="1366" height="700" viewBox="0 0 1366 700"><path d="M267 247.5H1343M267 268.5H1343M267 289.5H1343M267 310.5H1343M267 331.5H1343M267 352.5H1343M267 373.5H1343M267 394.5H1343M267 415.5H1343M267 436.5H1343M267 457.5H1343M267 478.5H1343M267 499.5H1343M267 520.5H1343M267 541.5H1343M267 562.5H1343M267 583.5H1343M267 604.5H1343M267 625.5H1343M267 646.5H1343M267 667.5H1343M338.5 227V677M410.5 227V677M482.5 227V677M554.5 227V677M626.5 227V677M698.5 227V677M770.5 227V677M842.5 227V677M914.5 227V677M986.5 227V677M1058.5 227V677M1130.5 227V677M1202.5 227V677M1274.5 227V677" stroke="#d4d4d4" fill="none"/><path d="M238 247.5H266M238 268.5H266M238 289.5H266M238 310.5H266M238 331.5H266M238 352.5H266M238 373.5H266M238 394.5H266M238 415.5H266M238 436.5H266M238 457.5H266M238 478.5H266M238 499.5H266M238 520.5H266M238 541.5H266M238 562.5H266M238 583.5H266M238 604.5H266M238 625.5H266M238 646.5H266M238 667.5H266M266.5 207V226M338.5 207V226M410.5 207V226M482.5 207V226M554.5 207V226M626.5 207V226M698.5 207V226M770.5 207V226M842.5 207V226M914.5 207V226M986.5 207V226M1058.5 207V226M1130.5 207V226M1202.5 207V226M1274.5 207V226" stroke="#ababab" fill="none"/><path d="M238 226.500H1344M266.500 207V677M1343.500 227V677" stroke="#999" fill="none"/><path d="M262 211v12h-12z" fill="#b7b7b7"/></svg>
<div class="b" style="left:1130px;top:225px;width:73px;height:2px;background:#217346;"></div>
<div class="b" style="left:265px;top:436px;width:2px;height:22px;background:#217346;"></div>
<span class="t s" style="left:296.72px;top:209.00px;font-size:16px;color:#000;">A</span>
<span class="t s" style="left:369.16px;top:209.00px;font-size:16px;color:#000;">B</span>
<span class="t s" style="left:441.16px;top:209.00px;font-size:16px;color:#000;">C</span>
<span class="t s" style="left:512.72px;top:209.00px;font-size:16px;color:#000;">D</span>
<span class="t s" style="left:585.61px;top:209.00px;font-size:16px;color:#000;">E</span>
<span class="t s" style="left:658.05px;top:209.00px;font-size:16px;color:#000;">F</span>
<span class="t s" style="left:728.72px;top:209.00px;font-size:16px;color:#000;">G</span>
<span class="t s" style="left:800.72px;top:209.00px;font-size:16px;color:#000;">H</span>
<span class="t s" style="left:875.84px;top:209.00px;font-size:16px;color:#000;">I</span>
<span class="t s" style="left:947.39px;top:209.00px;font-size:16px;color:#000;">J</span>
<span class="t s" style="left:1016.72px;top:209.00px;font-size:16px;color:#000;">K</span>
<span class="t s" style="left:1089.61px;top:209.00px;font-size:16px;color:#000;">L</span>
<span class="t s" style="left:1159.39px;top:209.00px;font-size:16px;color:#217346;">M</span>
<span class="t s" style="left:1232.72px;top:209.00px;font-size:16px;color:#000;">N</span>
<span class="t s" style="left:1304.72px;top:209.00px;font-size:16px;color:#000;">O</span>
<span class="t s" style="left:248.00px;top:230.00px;font-size:16px;color:#000;">1</span>
<span class="t s" style="left:248.00px;top:251.00px;font-size:16px;color:#000;">2</span>
<span class="t s" style="left:248.00px;top:272.00px;font-size:16px;color:#000;">3</span>
<span class="t s" style="left:248.00px;top:293.00px;font-size:16px;color:#000;">4</span>
<span class="t s" style="left:248.00px;top:314.00px;font-size:16px;color:#000;">5</span>
<span class="t s" style="left:248.00px;top:335.00px;font-size:16px;color:#000;">6</span>
<span class="t s" style="left:248.00px;top:356.00px;font-size:16px;color:#000;">7</span>
<span class="t s" style="left:248.00px;top:377.00px;font-size:16px;color:#000;">8</span>
<span class="t s" style="left:248.00px;top:398.00px;font-size:16px;color:#000;">9</span>
<span class="t s" style="left:244.00px;top:419.00px;font-size:16px;color:#000;">10</span>
<span class="t s" style="left:244.30px;top:440.00px;font-size:16px;color:#217346;">11</span>
<span class="t s" style="left:244.00px;top:461.00px;font-size:16px;color:#000;">12</span>
<span class="t s" style="left:244.00px;top:482.00px;font-size:16px;color:#000;">13</span>
<span class="t s" style="left:244.00px;top:503.00px;font-size:16px;color:#000;">14</span>
<span class="t s" style="left:244.00px;top:524.00px;font-size:16px;color:#000;">15</span>
<span class="t s" style="left:244.00px;top:545.00px;font-size:16px;color:#000;">16</span>
<span class="t s" style="left:244.00px;top:566.00px;font-size:16px;color:#000;">17</span>
<span class="t s" style="left:244.00px;top:587.00px;font-size:16px;color:#000;">18</span>
<span class="t s" style="left:244.00px;top:608.00px;font-size:16px;color:#000;">19</span>
<span class="t s" style="left:244.00px;top:629.00px;font-size:16px;color:#000;">20</span>
<span class="t s" style="left:244.00px;top:650.00px;font-size:16px;color:#000;">21</span>
<div class="b" style="left:238px;top:668px;width:28px;height:9px;overflow:hidden"><span class="t s" style="left:6px;top:3px;font-size:16px">22</span></div>
<span class="t s" style="left:340.50px;top:251.00px;font-size:16px;transform:scaleX(0.9561);">y=sqrt((2x+4)/(3-x))</span>
<span class="t s" style="left:370.50px;top:293.00px;font-size:16px;">x</span>
<span class="t s" style="left:442.50px;top:293.00px;font-size:16px;">y</span>
<span class="t s" style="left:367.84px;top:314.00px;font-size:16px;">-4</span>
<span class="t s" style="left:414.50px;top:314.00px;font-size:16px;">########</span>
<span class="t s" style="left:367.84px;top:335.00px;font-size:16px;">-3</span>
<span class="t s" style="left:414.50px;top:335.00px;font-size:16px;">########</span>
<span class="t s" style="left:367.84px;top:356.00px;font-size:16px;">-2</span>
<span class="t s" style="left:442.50px;top:356.00px;font-size:16px;">0</span>
<span class="t s" style="left:367.84px;top:377.00px;font-size:16px;">-1</span>
<span class="t s" style="left:416.50px;top:377.00px;font-size:16px;">0.353553</span>
<span class="t s" style="left:370.50px;top:398.00px;font-size:16px;">0</span>
<span class="t s" style="left:416.50px;top:398.00px;font-size:16px;">0.666667</span>
<span class="t s" style="left:370.50px;top:419.00px;font-size:16px;">1</span>
<span class="t s" style="left:416.50px;top:419.00px;font-size:16px;">1.224745</span>
<span class="t s" style="left:370.50px;top:440.00px;font-size:16px;">2</span>
<span class="t s" style="left:416.50px;top:440.00px;font-size:16px;">2.828427</span>
<span class="t s" style="left:370.50px;top:461.00px;font-size:16px;">3</span>
<span class="t s" style="left:417.95px;top:461.00px;font-size:16px;">#ДЕЛ/0!</span>
<svg class="b" style="left:411px;top:311px;" width="6" height="6" viewBox="0 0 6 6"><path d="M0 0h5.500L0 5.500z" fill="#e31a1a"/></svg>
<svg class="b" style="left:411px;top:332px;" width="6" height="6" viewBox="0 0 6 6"><path d="M0 0h5.500L0 5.500z" fill="#e31a1a"/></svg>
<svg class="b" style="left:411px;top:458px;" width="6" height="6" viewBox="0 0 6 6"><path d="M0 0h5.500L0 5.500z" fill="#e31a1a"/></svg>
<div class="b" style="left:1129px;top:435px;width:75px;height:24px;border:2px solid #217346;"></div>
<div class="b" style="left:1199px;top:454px;width:6px;height:6px;background:#217346;border-left:1px solid #fff;border-top:1px solid #fff;"></div>
</div>
<div id="chart" role="group" aria-label="Chart">
<svg class="b" style="left:506px;top:272px" width="552" height="334" viewBox="0 0 552 334"><rect x=".5" y=".5" width="551" height="333" fill="#fff" stroke="#d4d4d4"/><path d="M19.5 49.5V318.5M76.5 49.5V318.5M134.5 49.5V318.5M191.5 49.5V318.5M248.5 49.5V318.5M305.5 49.5V318.5M363.5 49.5V318.5M420.5 49.5V318.5M477.5 49.5V318.5M534.5 49.5V318.5M19.5 49.5H535M19.5 87.5H535M19.5 126.5H535M19.5 164.5H535M19.5 203.5H535M19.5 241.5H535M19.5 280.5H535M19.5 318.5H535" stroke="#d9d9d9" fill="none"/><path d="M19.5 280.5H535M305.5 49.5V318.5" stroke="#bfbfbf" fill="none"/><path d="M77.1 280.6C86.6 280.6 115.3 280.6 134.4 280.6C153.4 280.6 172.5 285.1 191.6 280.6C210.7 276.0 229.8 261.9 248.9 253.4C268.0 244.9 287.1 240.5 306.2 229.3C325.3 218.2 344.4 214.1 363.5 186.4C382.6 158.7 401.7 47.5 420.7 63.2C439.8 78.9 468.5 244.3 478.0 280.6" fill="none" stroke="#5b9bd5" stroke-width="2.200" stroke-linecap="round"/><circle cx="77.1" cy="280.6" r="3.400" fill="#5b9bd5"/><circle cx="134.4" cy="280.6" r="3.400" fill="#5b9bd5"/><circle cx="191.6" cy="280.6" r="3.400" fill="#5b9bd5"/><circle cx="248.9" cy="253.4" r="3.400" fill="#5b9bd5"/><circle cx="306.2" cy="229.3" r="3.400" fill="#5b9bd5"/><circle cx="363.5" cy="186.4" r="3.400" fill="#5b9bd5"/><circle cx="420.7" cy="63.2" r="3.400" fill="#5b9bd5"/><circle cx="478.0" cy="280.6" r="3.400" fill="#5b9bd5"/></svg>
<span class="t" style="left:696.50px;top:286.00px;font-size:17px;transform:scaleX(1.0102);color:#595959;">Название диаграммы</span>
<span class="t" style="left:519.61px;top:562.00px;font-size:11px;color:#595959;">-5</span>
<span class="t" style="left:576.89px;top:562.00px;font-size:11px;color:#595959;">-4</span>
<span class="t" style="left:634.17px;top:562.00px;font-size:11px;color:#595959;">-3</span>
<span class="t" style="left:691.44px;top:562.00px;font-size:11px;color:#595959;">-2</span>
<span class="t" style="left:748.72px;top:562.00px;font-size:11px;color:#595959;">-1</span>
<span class="t" style="left:808.83px;top:562.00px;font-size:11px;color:#595959;">0</span>
<span class="t" style="left:866.11px;top:562.00px;font-size:11px;color:#595959;">1</span>
<span class="t" style="left:923.39px;top:562.00px;font-size:11px;color:#595959;">2</span>
<span class="t" style="left:980.66px;top:562.00px;font-size:11px;color:#595959;">3</span>
<span class="t" style="left:1037.94px;top:562.00px;font-size:11px;color:#595959;">4</span>
<span class="t" style="left:794.88px;top:315.00px;font-size:11px;color:#595959;">3</span>
<span class="t" style="left:785.71px;top:354.00px;font-size:11px;color:#595959;">2.5</span>
<span class="t" style="left:794.88px;top:392.00px;font-size:11px;color:#595959;">2</span>
<span class="t" style="left:785.71px;top:431.00px;font-size:11px;color:#595959;">1.5</span>
<span class="t" style="left:794.88px;top:469.00px;font-size:11px;color:#595959;">1</span>
<span class="t" style="left:785.71px;top:508.00px;font-size:11px;color:#595959;">0.5</span>
<span class="t" style="left:794.88px;top:546.00px;font-size:11px;color:#595959;">0</span>
<span class="t" style="left:782.05px;top:584.00px;font-size:11px;color:#595959;">-0.5</span>
</div>
<div id="sheet-tabs" role="group" aria-label="Sheet tabs and scrollbars">
<div class="b" style="left:238px;top:677px;width:1106px;height:1px;background:#ababab;"></div>
<div class="b" style="left:338px;top:677px;width:60px;height:23px;background:#fff;border:1px solid #c6c6c6;border-top:0;border-bottom:0;"></div>
<div class="b" style="left:338px;top:700px;width:60px;height:2px;background:#217346;"></div>
<span class="t" style="left:350.25px;top:685.00px;font-size:12.5px;transform:scaleX(0.9731);color:#217346;font-weight:700;">Лист1</span>
<svg class="b" style="left:264px;top:687px;" width="6" height="9" viewBox="0 0 6 9"><path d="M5 0v8L.5 4z" fill="#c3c3c3"/></svg>
<svg class="b" style="left:292px;top:687px;" width="6" height="9" viewBox="0 0 6 9"><path d="M1 0v8l4.500-4z" fill="#c3c3c3"/></svg>
<svg class="b" style="left:431px;top:683px;" width="17" height="17" viewBox="0 0 17 17"><circle cx="8.500" cy="8.500" r="7.500" fill="none" stroke="#777" stroke-width="1.200"/><path d="M4.500 8.500h8M8.500 4.500v8" stroke="#777" stroke-width="1.600"/></svg>
<div class="b" style="left:914px;top:685px;width:2px;height:2px;background:#b8b8b8;"></div>
<div class="b" style="left:914px;top:689px;width:2px;height:2px;background:#b8b8b8;"></div>
<div class="b" style="left:914px;top:693px;width:2px;height:2px;background:#b8b8b8;"></div>
<div class="b" style="left:931px;top:684px;width:412px;height:15px;background:#d0d0d0;"></div>
<div class="b" style="left:931px;top:684px;width:15px;height:15px;background:#fff;border:1px solid #ababab;"></div>
<svg class="b" style="left:936px;top:688px;" width="5" height="7" viewBox="0 0 5 7"><path d="M4.500 0v7L.5 3.500z" fill="#666"/></svg>
<div class="b" style="left:946px;top:684px;width:355px;height:15px;background:#fff;border:1px solid #ababab;"></div>
<div class="b" style="left:1329px;top:684px;width:15px;height:15px;background:#fff;border:1px solid #ababab;"></div>
<svg class="b" style="left:1334px;top:688px;" width="5" height="7" viewBox="0 0 5 7"><path d="M.5 0v7l4-3.500z" fill="#666"/></svg>
<div class="b" style="left:1347px;top:207px;width:16px;height:470px;background:#e6e6e6;"></div>
<div class="b" style="left:1347px;top:226px;width:15px;height:438px;background:#d0d0d0;"></div>
<div class="b" style="left:1347px;top:208px;width:15px;height:15px;background:#fff;border:1px solid #ababab;"></div>
<svg class="b" style="left:1351px;top:213px;" width="7" height="5" viewBox="0 0 7 5"><path d="M0 4.500h7L3.500 .5z" fill="#666"/></svg>
<div class="b" style="left:1347px;top:223px;width:15px;height:418px;background:#fff;border:1px solid #ababab;"></div>
<div class="b" style="left:1347px;top:663px;width:15px;height:15px;background:#fff;border:1px solid #ababab;"></div>
<svg class="b" style="left:1351px;top:668px;" width="7" height="5" viewBox="0 0 7 5"><path d="M0 .5h7L3.500 4.500z" fill="#555"/></svg>
</div>
<div id="statusbar" role="group" aria-label="Status bar">
<div class="b" style="left:1px;top:705px;width:1364px;height:1px;background:#c8c8c8;"></div>
<div class="b" style="left:1px;top:706px;width:1364px;height:21px;background:#f1f1f1;"></div>
<span class="t" style="left:9.00px;top:711.00px;font-size:10.5px;transform:scaleX(1.1412);color:#555;">Готово</span>
<span class="t" style="left:72.00px;top:711.00px;font-size:10.5px;transform:scaleX(1.0516);color:#555;">Scroll Lock</span>
<div class="b" style="left:1063px;top:706px;width:37px;height:21px;background:#cacaca;"></div>
<svg class="b" style="left:1074px;top:710px;" width="14" height="13" viewBox="0 0 14 13"><path d="M.5 .5h12v11H.5zM4.500 .5v11M8.500 .5v11M.5 4.500h12M.5 8h12" fill="none" stroke="#666"/></svg>
<svg class="b" style="left:1112px;top:709px;" width="15" height="13" viewBox="0 0 15 13"><path d="M.5 .5h13v11H.5z" fill="none" stroke="#666"/><path d="M3.500 3.500h7v6h-7zM5 5.500h4M5 7.500h4" fill="none" stroke="#666"/></svg>
<svg class="b" style="left:1150px;top:709px;" width="15" height="14" viewBox="0 0 15 14"><path d="M.5 .5h13v12H.5z" fill="none" stroke="#666"/><path d="M4.500 .5v6.500h5V.5" fill="none" stroke="#666"/></svg>
<div class="b" style="left:1181px;top:715px;width:6px;height:2px;background:#555;"></div>
<div class="b" style="left:1190px;top:715.5px;width:100px;height:1px;background:#9a9a9a;"></div>
<div class="b" style="left:1239px;top:710px;width:4px;height:12px;background:#666;"></div>
<div class="b" style="left:1295px;top:715px;width:8px;height:2px;background:#555;"></div>
<div class="b" style="left:1298px;top:712px;width:2px;height:8px;background:#555;"></div>
<span class="t" style="left:1318.00px;top:711.00px;font-size:10.5px;transform:scaleX(1.0426);color:#555;">100%</span>
<div class="b" style="left:0px;top:66px;width:1px;height:662px;background:#217346;"></div>
<div class="b" style="left:1364px;top:66px;width:2px;height:662px;background:#217346;"></div>
<div class="b" style="left:0px;top:727px;width:1366px;height:1px;background:#217346;"></div>
<div class="b" style="left:1348px;top:210px;width:16px;height:140px;overflow:hidden"><div class="b" style="left:13px;top:20px;width:10px;height:96px;border-radius:4px;box-shadow:-2px 1px 8px 4px rgba(0,0,0,.6)"></div></div>
<div class="b" style="left:1361px;top:230px;width:8px;height:96px;border-radius:4px;background:linear-gradient(#d3e0dc,#c2cecb 55%,#a9b3b1);border:1px solid #eef3f1"></div>
</div>
<div id="taskbar" role="group" aria-label="Windows taskbar">
<div class="b" style="left:0;top:728px;width:1366px;height:40px;background:radial-gradient(ellipse 60px 22px at 530px 12px,rgba(110,100,94,.55),rgba(110,100,94,0)),radial-gradient(ellipse 70px 24px at 720px 26px,rgba(105,95,88,.5),rgba(105,95,88,0)),radial-gradient(ellipse 50px 18px at 400px 30px,rgba(30,24,22,.45),rgba(30,24,22,0)),radial-gradient(ellipse 40px 16px at 620px 8px,rgba(40,32,30,.4),rgba(40,32,30,0)),linear-gradient(90deg,#0e0e0e 0,#101010 292px,#3a302c 325px,#423935 420px,#4a413d 560px,#463d39 700px,#3e3531 790px,#2c2422 850px,#221b19 920px,#1a1413 1000px,#151110 1366px)"></div>
<div class="b" style="left:0;top:728px;width:1366px;height:1px;background:#16281d"></div>
<div class="b" style="left:0;top:729px;width:1366px;height:1px;background:rgba(235,240,236,.5)"></div>
<div class="b" style="left:0;top:730px;width:1366px;height:38px;background:linear-gradient(rgba(255,255,255,.08) 0,rgba(255,255,255,.06) 2px,rgba(255,255,255,.05) 45%,rgba(0,0,0,.10) 55%,rgba(0,0,0,.18) 100%)"></div>
<div class="b" style="left:1px;top:729px;width:13px;height:39px;background:linear-gradient(135deg,#4a4a4a,#1c1c1c 40%,#111);border:1px solid #6a6a6a;border-top-color:#8a8a8a"></div>
<span class="t" style="left:43.50px;top:734.00px;font-size:14px;transform:scaleX(0.8848);color:#fff;">22:04</span>
<span class="t" style="left:27.00px;top:751.00px;font-size:14px;transform:scaleX(0.9416);color:#fff;">02/11/2016</span>
<svg class="b" style="left:112px;top:741px;" width="15" height="13" viewBox="0 0 15 13"><path d="M1 10.500h2V13H1zM4 8.500h2V13H4zM7 6.500h2V13H7zM10 4.500h2V13h-2z" fill="#fff"/><path d="M13 2.500h1.500V13H13z" fill="#8a8a8a"/></svg>
<svg class="b" style="left:138px;top:741px;" width="14" height="16" viewBox="0 0 14 16"><path d="M1 5h2.500L7.500 1.500v13L3.500 11H1z" fill="#fff"/><path d="M10 5c1.300 1.500 1.300 4.500 0 6" fill="none" stroke="#ccc" stroke-width="1.200"/></svg>
<svg class="b" style="left:165px;top:747px;" width="7" height="4" viewBox="0 0 7 4"><path d="M0 4h7L3.500 0z" fill="#fff"/></svg>
<span class="t" style="left:188.00px;top:740.00px;font-size:12.5px;transform:scaleX(0.8638);color:#fff;">EN</span>
<svg class="b" style="left:214px;top:734px;" width="9" height="7" viewBox="0 0 9 7"><path d="M3.800 .8 1 3.500 3.800 6.200M7.800 .8 5 3.500 7.800 6.200" fill="none" stroke="#fff" stroke-width="1.300"/></svg>
<span class="t" style="left:230.00px;top:740.00px;font-size:13px;transform:scaleX(1.0512);color:#fff;unicode-bidi:plaintext;">שולחן העבודה</span>
<svg class="b" style="left:325px;top:732px;" width="34" height="32" viewBox="0 0 34 32"><path d="M2.200 12.200h28.600v16H2.200z" fill="#fbf8c6" stroke="#d3d8e6" stroke-width="2.400"/><path d="M1 11h31v3.500H1z" fill="#dfe3ee"/><path d="M5 24.300h23" stroke="#b9a93c" stroke-width="1.100"/><path d="M21.500 23.500c.8-.2 1-1.500 1-3 0-1.800-.3-3.200-.8-3.800.8.800 2 2.500 3.300 3.300" fill="none" stroke="#8a7d8a" stroke-width="1"/><path d="M2 1.500 6 6.500 13 17 17.300 22.500" fill="none" stroke="#0c0c0c" stroke-width="2.300" stroke-linecap="round"/><path d="M3.800 3.300 9.500 11" stroke="#dfeaf0" stroke-width="1.100" stroke-linecap="round"/></svg>
<svg class="b" style="left:829px;top:732px;" width="29" height="29" viewBox="0 0 29 29"><rect x="1" y="1" width="27" height="27" fill="#2a0604" stroke="#d9261c" stroke-width="2"/><path d="M6 22c1.500-2.500 5-5.500 7.500-9.500 1.500-2.500 2-5.500 1-6.500-1-.8-1.800.8-1.200 3 .8 3.500 3.500 7 6.500 8.500 2 .9 3.800.3 3.200-.9-.6-1-3-1.200-6-.6-4 .8-8 2.500-10 4.500-1 1-.8 2 .2 1.800z" fill="none" stroke="#fff" stroke-width="1.100"/></svg>
<svg class="b" style="left:890px;top:732px;" width="32" height="32" viewBox="0 0 32 32"><path d="M13 4.500h16.300v22.800H13z" fill="#fff" stroke="#2b579a" stroke-width=".5"/><path d="M19.500 8.300h7M19.500 11.400h7M19.500 14.500h7M19.500 17.600h7M19.500 20.700h7M19.500 23.700h7" stroke="#2b579a" stroke-width="1.100"/><path d="M0 3.500 18.200 .3v30.800L0 27.600z" fill="#2b579a"/><text transform="translate(9.200,21.300) scale(.92,1)" text-anchor="middle" font-family="Liberation Sans,sans-serif" font-weight="700" font-size="14.500" fill="#fff">W</text></svg>
<svg class="b" style="left:952px;top:732px;" width="32" height="32" viewBox="0 0 32 32"><path d="M13 4.500h16.300v22.800H13z" fill="#fff" stroke="#d24726" stroke-width=".5"/><circle cx="22.800" cy="11" r="4" fill="#d24726"/><path d="M23.500 10.300V5.800A4.500 4.500 0 0 1 28 10.300z" fill="#fff" stroke="#d24726" stroke-width=".7"/><path d="M20 19.500h6.500M20 22.300h6.500" stroke="#d24726" stroke-width="1.200"/><path d="M0 3.500 18.200 .3v30.800L0 27.600z" fill="#d24726"/><text transform="translate(9.200,21.300) scale(.92,1)" text-anchor="middle" font-family="Liberation Sans,sans-serif" font-weight="700" font-size="14.500" fill="#fff">P</text></svg>
<svg class="b" style="left:1014px;top:732px;" width="32" height="32" viewBox="0 0 32 32"><path d="M16 9.500h14.300v14H16z" fill="#fff"/><path d="M18 10l6 5.500 6.300-5.500" fill="none" stroke="#0072c6" stroke-width="1.800"/><path d="M0 3.500 18.200 .3v30.800L0 27.600z" fill="#0072c6"/><text transform="translate(9.200,21.300) scale(.92,1)" text-anchor="middle" font-family="Liberation Sans,sans-serif" font-weight="700" font-size="14.500" fill="#fff">O</text></svg>
<svg class="b" style="left:1076px;top:732px;" width="32" height="32" viewBox="0 0 32 32"><path d="M13 4.500h16.300v22.800H13z" fill="#fff" stroke="#80397b" stroke-width=".5"/><path d="M19.500 9h6.500M19.500 12.500h6.500M19.500 16h6.500M19.500 19.500h6.500M19.500 23h6.500" stroke="#80397b" stroke-width="1.300"/><path d="M28.300 7.500v3.500M28.300 13v3.500M28.300 18.500v3.500" stroke="#80397b" stroke-width="1.600"/><path d="M0 3.500 18.200 .3v30.800L0 27.600z" fill="#80397b"/><text transform="translate(9.200,21.300) scale(.92,1)" text-anchor="middle" font-family="Liberation Sans,sans-serif" font-weight="700" font-size="14.500" fill="#fff">N</text></svg>
<div class="b" style="left:1124px;top:729px;width:58px;height:38px;border-radius:3px;border:1px solid #f4f7f5;background:linear-gradient(125deg,#eef3ef 0,#cfdcd3 28%,#8fae9b 47%,#a9c2b3 55%,#d9e4dc 78%,#eef3ef 100%)"></div>
<svg class="b" style="left:1138px;top:732px;" width="32" height="32" viewBox="0 0 32 32"><path d="M13 4.500h16.300v22.800H13z" fill="#fff" stroke="#217346" stroke-width=".5"/><path d="M18.500 7.500h10v17h-10zM18.500 11h10M18.500 14.300h10M18.500 17.600h10M18.500 21h10M23 7.500v17" fill="none" stroke="#217346" stroke-width="1.200"/><path d="M0 3.500 18.200 .3v30.800L0 27.600z" fill="#217346"/><text transform="translate(9.200,21.300) scale(.92,1)" text-anchor="middle" font-family="Liberation Sans,sans-serif" font-weight="700" font-size="14.500" fill="#fff">X</text></svg>
<div class="b" style="left:1186px;top:729px;width:58px;height:38px;border-radius:3px;border:1px solid #9a9a9a;background:linear-gradient(125deg,#707070 0,#4a4a4a 40%,#2a2a2a 52%,#333 80%,#505050 100%)"></div>
<div class="b" style="left:1248px;top:729px;width:58px;height:38px;border-radius:3px;border:1px solid #9a9a9a;background:linear-gradient(125deg,#707070 0,#4a4a4a 40%,#2a2a2a 52%,#333 80%,#505050 100%)"></div>
<svg class="b" style="left:1198px;top:731px;" width="34" height="34" viewBox="0 0 34 34"><circle cx="11" cy="11" r="9.500" fill="#12a5e4"/><circle cx="23" cy="23" r="9.500" fill="#12a5e4"/><circle cx="17" cy="17" r="13.500" fill="#12a5e4"/><text x="17" y="26.300" text-anchor="middle" font-family="Liberation Sans,sans-serif" font-weight="700" font-size="26" fill="#fff">S</text></svg>
<svg class="b" style="left:1262px;top:733px;" width="30" height="30" viewBox="0 0 30 30"><circle cx="15" cy="15" r="14.500" fill="#fbc116"/><path d="M15 15 2.440 7.750A14.500 14.500 0 0 1 27.560 7.750z" fill="#e33b2e"/><path d="M15 15 2.440 7.750A14.500 14.500 0 0 0 15 29.500L21.500 17z" fill="#2da94f"/><path d="M15 8.500h12.900" stroke="#e33b2e" stroke-width="0"/><path d="M27.560 7.750H15l-6 7" fill="#e33b2e"/><circle cx="15" cy="15" r="6.600" fill="#fff"/><circle cx="15" cy="15" r="5.200" fill="#4a8af4"/></svg>
<svg class="b" style="left:1319px;top:729px;" width="40" height="39" viewBox="0 0 40 39"><defs><radialGradient id="orb" cx=".5" cy=".92" r=".8"><stop offset="0" stop-color="#55dcff"/><stop offset=".3" stop-color="#1592d0"/><stop offset=".62" stop-color="#0b5c9c"/><stop offset="1" stop-color="#2a6d9e"/></radialGradient><linearGradient id="orbh" x1="0" y1="0" x2="0" y2="1"><stop offset="0" stop-color="#fff" stop-opacity=".55"/><stop offset="1" stop-color="#fff" stop-opacity=".22"/></linearGradient></defs><ellipse cx="20.200" cy="19.500" rx="18.600" ry="17.600" fill="url(#orb)" stroke="#3d7fae" stroke-width="1"/><path d="M2.800 17.500a17.400 15.800 0 0 1 34.800 0c-7 3.500-27.800 3.500-34.800 0z" fill="url(#orbh)"/>
<g transform="translate(21.500,18.800) scale(1.120,1.220) translate(-17.400,-18.500)"><path d="M11 11c2.500-1.500 5-1.500 7.500 0l-1.800 7c-2.500-1.500-5-1.500-7.500 0z" fill="#f2672a"/><path d="M20 11.500c2.500 1.500 5 1.500 7.500 0l-1.800 7c-2.500 1.500-5 1.500-7.500 0z" fill="#8fc63f"/><path d="M8.800 19.500c2.500-1.500 5-1.500 7.500 0l-1.800 7c-2.500-1.500-5-1.500-7.500 0z" fill="#35a4ee"/><path d="M17.800 20c2.500 1.500 5 1.500 7.500 0l-1.800 7c-2.500 1.500-5 1.500-7.500 0z" fill="#fcc22e"/></g></svg>
</div>
</body></html>
